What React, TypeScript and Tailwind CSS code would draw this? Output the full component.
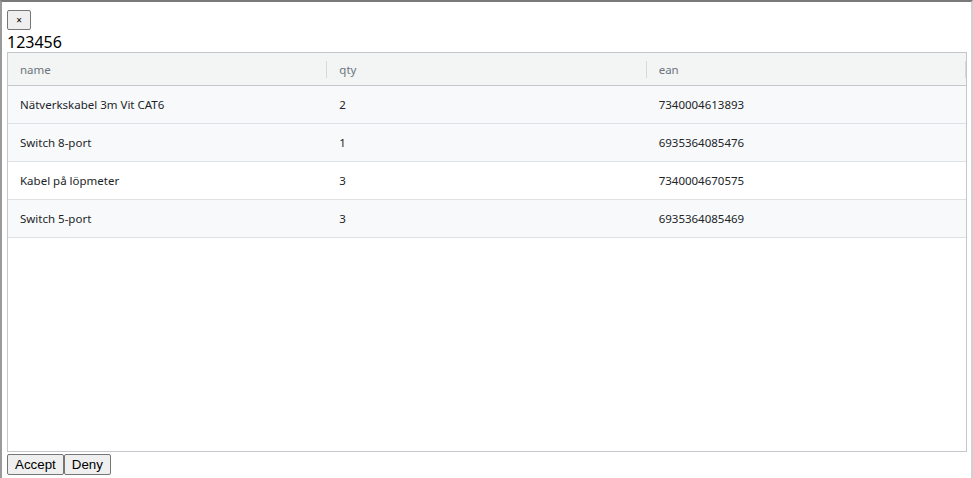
const rows = [
  { name: 'Nätverkskabel 3m Vit CAT6', qty: 2, ean: '7340004613893', bg: 'bg-[#f8f9fa]' },
  { name: 'Switch 8-port', qty: 1, ean: '6935364085476', bg: 'bg-[#f8f9fa]' },
  { name: 'Kabel på löpmeter', qty: 3, ean: '7340004670575', bg: 'bg-white' },
  { name: 'Switch 5-port', qty: 3, ean: '6935364085469', bg: 'bg-[#f8f9fa]' },
];

const cols = ['name', 'qty', 'ean'];

export default function App() {
  return (
    <div className="h-[478px] w-[973px] overflow-hidden bg-white border-t-2 border-l-2 border-r-2 border-t-[#7a7a7a] border-l-[#9a9a9a] border-r-[#d0d0d0] pl-[5px] pt-[8px] font-['Noto_Sans',sans-serif] text-[#212529]">
      <button className="flex h-[20px] w-[24px] items-center justify-center rounded-[2px] border border-[#767676] bg-[#efefef] text-[10px] leading-none text-black">
        ×
      </button>
      <div className="h-[22px] pt-[1px] text-[16px] leading-[22px] text-black">123456</div>

      {/* Grid */}
      <div className="flex h-[400px] w-[960px] flex-col border border-[#c4c8cc] bg-white">
        <div className="flex h-[33px] border-b border-[#c4c8cc] bg-[#f3f4f4] pt-[1px] text-[11.5px] text-[#6c757d]">
          {cols.map((c) => (
            <div key={c} className="relative flex flex-1 items-center px-3">
              {c}
              <span className="absolute right-0 top-[7px] h-[17px] w-px bg-[#d6d9dc]" />
            </div>
          ))}
        </div>
        {rows.map((r) => (
          <div key={r.ean} className={`flex h-[38px] border-b border-[#dfe2e5] pt-[1px] text-[11.5px] ${r.bg}`}>
            <div className="flex flex-1 items-center px-3">{r.name}</div>
            <div className="flex flex-1 items-center px-3">{r.qty}</div>
            <div className="flex flex-1 items-center px-3">{r.ean}</div>
          </div>
        ))}
      </div>

      <div className="mt-[2px] flex font-['Liberation_Sans',Arial,sans-serif] text-[13.33px] text-black">
        <button className="h-[21px] rounded-[2px] border border-[#767676] bg-[#efefef] px-[7px] leading-none">Accept</button>
        <button className="h-[21px] rounded-[2px] border border-[#767676] bg-[#efefef] px-[7px] leading-none">Deny</button>
      </div>
    </div>
  );
}
